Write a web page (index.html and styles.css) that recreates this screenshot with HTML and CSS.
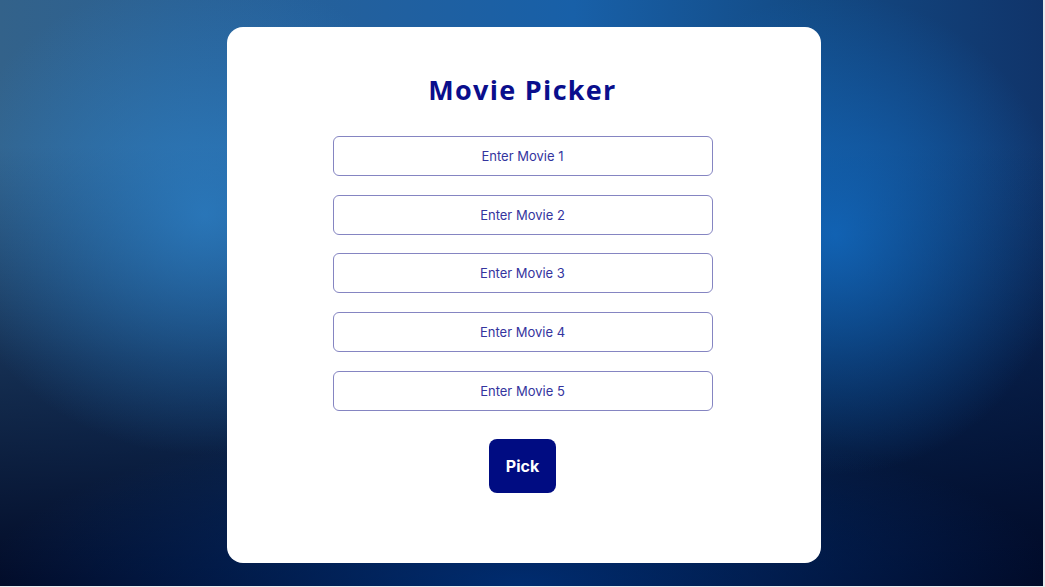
FILE: index.html
```html
<!DOCTYPE html>
<html lang="en">
<head>
<meta charset="utf-8">
<title>Movie Picker</title>
<link rel="stylesheet" href="styles.css">
</head>
<body>
<div class="page">
  <main class="card">
    <h1 class="title">Movie Picker</h1>
    <form class="form">
      <input class="movie" type="text" placeholder="Enter Movie 1">
      <input class="movie" type="text" placeholder="Enter Movie 2">
      <input class="movie" type="text" placeholder="Enter Movie 3">
      <input class="movie" type="text" placeholder="Enter Movie 4">
      <input class="movie" type="text" placeholder="Enter Movie 5">
      <button class="pick" type="button">Pick</button>
    </form>
  </main>
</div>
</body>
</html>
```

FILE: styles.css
```css
html, body {
  margin: 0;
  padding: 0;
  background: #e9ebee;
}
.page {
  width: 1043px;
  height: 586px;
  box-sizing: border-box;
  display: flex;
  justify-content: flex-start;
  align-items: flex-start;
  padding-top: 27px;
  padding-left: 227px;
  background:
    radial-gradient(ellipse 260px 240px at 205px 215px, rgba(44,130,202,0.75), rgba(44,130,202,0) 100%),
    radial-gradient(ellipse 230px 240px at 835px 235px, rgba(18,108,196,0.8), rgba(18,108,196,0) 100%),
    radial-gradient(ellipse 540px 170px at 50% 100%, rgba(0,50,124,0.85), rgba(0,50,124,0) 100%),
    linear-gradient(to bottom, rgba(0,10,40,0) 25%, rgba(0,12,44,0.6) 62%, rgba(0,8,36,0.97) 100%),
    linear-gradient(to right, #33628a 0%, #22609e 35%, #1860a8 55%, #134a84 78%, #10346a 100%);
}
.card {
  width: 594px;
  height: 536px;
  box-sizing: border-box;
  background: #ffffff;
  border-radius: 16px;
  display: flex;
  flex-direction: column;
  align-items: center;
  padding-top: 46px;
  padding-right: 3px;
}
.title {
  margin: 0;
  font-family: "Open Sans", "Noto Sans", sans-serif;
  font-weight: 700;
  font-size: 27px;
  line-height: 34px;
  letter-spacing: 1.3px;
  color: #0a0e8c;
}
.form {
  margin-top: 29px;
  display: flex;
  flex-direction: column;
  align-items: center;
  gap: 18.7px;
}
.movie {
  width: 380px;
  height: 40px;
  box-sizing: border-box;
  border: 1px solid #8585c2;
  border-radius: 6px;
  background: #ffffff;
  text-align: center;
  font-family: Inter, "Noto Sans", sans-serif;
  font-size: 13px;
  color: #2a2a9a;
  outline: none;
  padding: 0;
}
.movie::placeholder {
  color: #34349e;
  opacity: 1;
}
.pick {
  margin-top: 10px;
  width: 67px;
  height: 54px;
  border: none;
  border-radius: 8px;
  background: #000c82;
  color: #ffffff;
  font-family: Inter, "Noto Sans", sans-serif;
  font-weight: 700;
  font-size: 16px;
  padding: 0;
  cursor: pointer;
}
```
